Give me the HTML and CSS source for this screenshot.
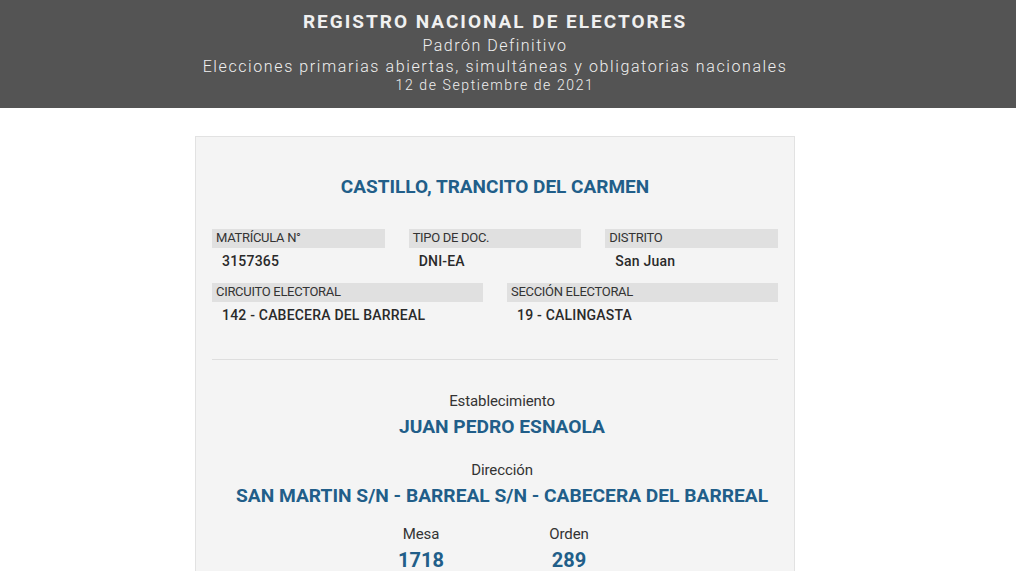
FILE: index.html
```html
<!DOCTYPE html>
<html lang="es">
<head>
<meta charset="utf-8">
<title>Padrón</title>
<link rel="stylesheet" href="styles.css">
</head>
<body>
<header class="top">
  <div class="t1">REGISTRO NACIONAL DE ELECTORES</div>
  <div class="t2">Padrón Definitivo</div>
  <div class="t3">Elecciones primarias abiertas, simultáneas y obligatorias nacionales</div>
  <div class="t4">12 de Septiembre de 2021</div>
</header>
<main class="card">
  <h1 class="name">CASTILLO, TRANCITO DEL CARMEN</h1>
  <div class="grid g3">
    <div class="field"><div class="lbl">MATRÍCULA N°</div><div class="val">3157365</div></div>
    <div class="field"><div class="lbl">TIPO DE DOC.</div><div class="val">DNI-EA</div></div>
    <div class="field"><div class="lbl">DISTRITO</div><div class="val">San Juan</div></div>
  </div>
  <div class="grid g2">
    <div class="field"><div class="lbl">CIRCUITO ELECTORAL</div><div class="val">142 - CABECERA DEL BARREAL</div></div>
    <div class="field"><div class="lbl">SECCIÓN ELECTORAL</div><div class="val">19 - CALINGASTA</div></div>
  </div>
  <hr class="sep">
  <div class="info">
    <div class="shift">
      <div class="ilbl">Establecimiento</div>
      <div class="ival">JUAN PEDRO ESNAOLA</div>
      <div class="ilbl">Dirección</div>
      <div class="ival">SAN MARTIN S/N - BARREAL S/N - CABECERA DEL BARREAL</div>
    </div>
    <div class="pair">
      <div class="pcol"><div class="ilbl">Mesa</div><div class="num">1718</div></div>
      <div class="pcol"><div class="ilbl">Orden</div><div class="num">289</div></div>
    </div>
  </div>
</main>
</body>
</html>
```
FILE: styles.css
```css
html, body { margin: 0; padding: 0; background: #fff; }
body { font-family: Roboto, "Noto Sans", sans-serif; color: #222; }
.top {
  background: #545454;
  color: #f0f0f0;
  text-align: center;
  height: 108px;
  box-sizing: border-box;
  padding: 10px 26px 0 0;
}
.t1 { font-size: 19px; font-weight: 700; letter-spacing: 2px; line-height: 24px; }
.t2 { font-size: 16px; font-weight: 300; letter-spacing: 1.5px; line-height: 23px; }
.t3 { font-size: 16px; font-weight: 300; letter-spacing: 1.6px; line-height: 20px; }
.t4 { font-size: 14px; font-weight: 300; letter-spacing: 1.6px; line-height: 16px; }
.card {
  width: 600px;
  box-sizing: border-box;
  margin: 28px 0 0 195px;
  background: #f4f4f4;
  border: 1px solid #e2e2e2;
  padding: 39px 16px 20px;
  min-height: 460px;
}
.name {
  margin: 0 0 31px;
  text-align: center;
  color: #215e89;
  font-size: 19px;
  font-weight: 700;
  line-height: 22px;
}
.grid { display: grid; column-gap: 24px; margin-bottom: 12px; }
.g3 { grid-template-columns: repeat(3, 1fr); }
.g2 { grid-template-columns: repeat(2, 1fr); }
.lbl {
  background: #e0e0e0;
  font-size: 13px;
  line-height: 18px;
  height: 19px;
  padding-left: 4px;
  color: #333;
  letter-spacing: -0.3px;
}
.val {
  font-size: 14px;
  font-weight: 500;
  line-height: 20px;
  padding: 3px 0 0 10px;
  color: #2a2a2a;
  letter-spacing: 0.2px;
}
.sep { border: 0; border-top: 1px solid #dedede; margin: 34px 0 31px; }
.info { text-align: center; }
.shift { padding-left: 14px; }
.ilbl { font-size: 15px; color: #333; line-height: 20px; letter-spacing: -0.1px; }
.ival {
  color: #215e89;
  font-size: 19.2px;
  font-weight: 700;
  line-height: 24px;
  margin: 4px 0 21px;
}
.pair { display: flex; justify-content: center; gap: 60px; margin-top: -5px; }
.pcol { width: 88px; text-align: center; }
.num { color: #215e89; font-size: 20px; font-weight: 700; line-height: 26px; margin-top: 3px; }
```
